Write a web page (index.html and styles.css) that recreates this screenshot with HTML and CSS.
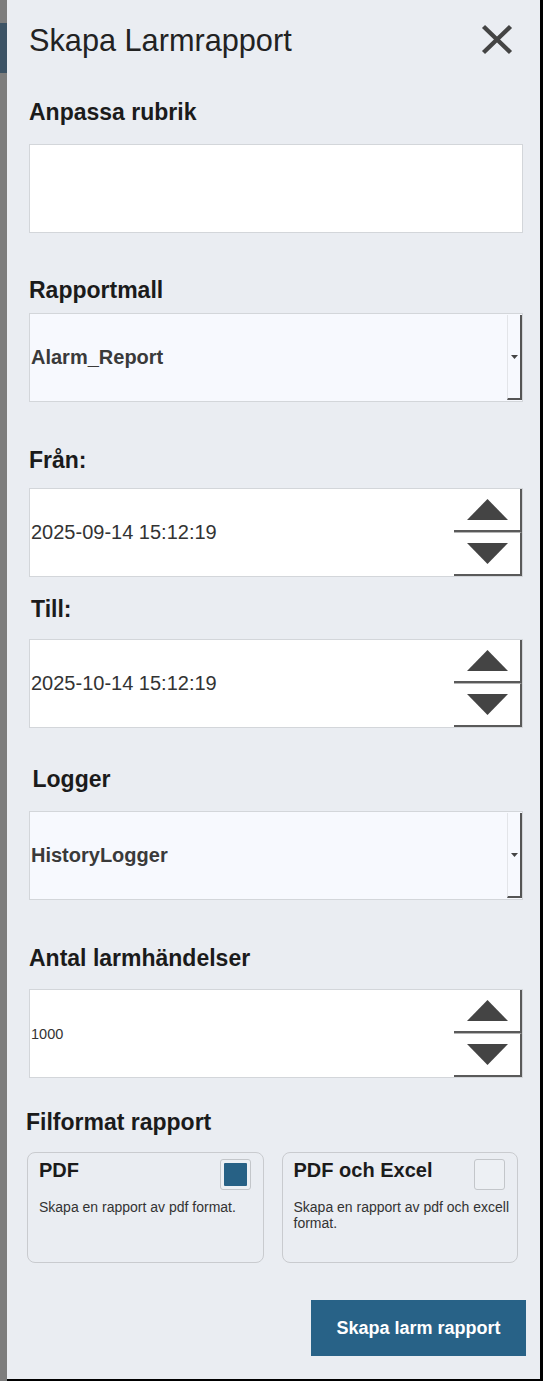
FILE: index.html
```html
<!DOCTYPE html>
<html lang="sv">
<head>
<meta charset="utf-8">
<title>Skapa Larmrapport</title>
<link rel="stylesheet" href="styles.css">
</head>
<body>
<div class="app">
  <div class="rail"><div class="rail-mark"></div></div>
  <main class="panel">
    <header class="panel-header">
      <h1 class="panel-title">Skapa Larmrapport</h1>
      <button class="close-btn" aria-label="Stäng">
        <svg width="32" height="31" viewBox="0 0 32 31"><path d="M2.5 2.5L29.5 28.5M29.5 2.5L2.5 28.5" stroke="#444" stroke-width="4.4" fill="none"/></svg>
      </button>
    </header>

    <section class="field field-rubrik">
      <div class="label">Anpassa rubrik</div>
      <div class="text-input"></div>
    </section>

    <section class="field field-mall">
      <div class="label">Rapportmall</div>
      <div class="select">
        <div class="select-value">Alarm_Report</div>
        <div class="select-btn"><svg width="7" height="4" viewBox="0 0 7 4"><path d="M0 0H7L3.5 4Z" fill="#444"/></svg></div>
      </div>
    </section>

    <section class="field field-fran">
      <div class="label">Från:</div>
      <div class="spin-input">
        <div class="spin-value">2025-09-14 15:12:19</div>
        <div class="spinner">
          <div class="spin-btn"><svg width="41" height="21" viewBox="0 0 41 21"><path d="M0 21L20.5 0L41 21Z" fill="#444"/></svg></div>
          <div class="spin-btn spin-down"><svg width="41" height="21" viewBox="0 0 41 21"><path d="M0 0H41L20.5 21Z" fill="#444"/></svg></div>
        </div>
      </div>
    </section>

    <section class="field field-till">
      <div class="label label-indent">Till:</div>
      <div class="spin-input">
        <div class="spin-value">2025-10-14 15:12:19</div>
        <div class="spinner">
          <div class="spin-btn"><svg width="41" height="21" viewBox="0 0 41 21"><path d="M0 21L20.5 0L41 21Z" fill="#444"/></svg></div>
          <div class="spin-btn spin-down"><svg width="41" height="21" viewBox="0 0 41 21"><path d="M0 0H41L20.5 21Z" fill="#444"/></svg></div>
        </div>
      </div>
    </section>

    <section class="field field-logger">
      <div class="label label-indent-wide">Logger</div>
      <div class="select">
        <div class="select-value">HistoryLogger</div>
        <div class="select-btn"><svg width="7" height="4" viewBox="0 0 7 4"><path d="M0 0H7L3.5 4Z" fill="#444"/></svg></div>
      </div>
    </section>

    <section class="field field-antal">
      <div class="label">Antal larmhändelser</div>
      <div class="spin-input">
        <div class="spin-value spin-value-small">1000</div>
        <div class="spinner">
          <div class="spin-btn"><svg width="41" height="21" viewBox="0 0 41 21"><path d="M0 21L20.5 0L41 21Z" fill="#444"/></svg></div>
          <div class="spin-btn spin-down"><svg width="41" height="21" viewBox="0 0 41 21"><path d="M0 0H41L20.5 21Z" fill="#444"/></svg></div>
        </div>
      </div>
    </section>

    <section class="field field-format">
      <div class="label">Filformat rapport</div>
      <div class="formats">
        <div class="card">
          <div class="card-head">
            <div class="card-title">PDF</div>
            <div class="checkbox checked"><div class="check-fill"></div></div>
          </div>
          <p class="card-desc">Skapa en rapport av pdf format.</p>
        </div>
        <div class="card">
          <div class="card-head">
            <div class="card-title">PDF och Excel</div>
            <div class="checkbox"></div>
          </div>
          <p class="card-desc">Skapa en rapport av pdf och excell format.</p>
        </div>
      </div>
    </section>

    <div class="actions">
      <button class="primary-btn">Skapa larm rapport</button>
    </div>
  </main>
</div>
</body>
</html>
```

FILE: styles.css
```css
* { box-sizing: border-box; }

html, body {
  margin: 0;
  padding: 0;
}

body {
  font-family: "Liberation Sans", Arial, sans-serif;
  background: #808080;
}

.app {
  display: flex;
  width: 543px;
  height: 1381px;
}

.rail {
  width: 7px;
  flex: none;
  background: #7d7d7d;
  padding-top: 23px;
}

.rail-mark {
  height: 50px;
  background: #3c5365;
}

.panel {
  flex: 1;
  display: flex;
  flex-direction: column;
  background: #eaedf2;
  border-right: 3px solid #000;
  border-bottom: 2px solid #000;
  padding: 23px 17px 0 22px;
}

.panel-header {
  display: flex;
  justify-content: space-between;
  align-items: flex-start;
  height: 36px;
}

.panel-title {
  margin: 0;
  font-size: 30.7px;
  line-height: 36px;
  font-weight: normal;
  color: #222;
}

.close-btn {
  display: block;
  width: 32px;
  height: 31px;
  margin: 1px 10px 0 0;
  padding: 0;
  border: 0;
  background: none;
}

.close-btn svg { display: block; }

.label {
  font-size: 23px;
  font-weight: bold;
  line-height: 26px;
  color: #1b1b1b;
}

.label-indent { margin-left: 2px; }
.label-indent-wide { margin-left: 3.5px; }

.field-rubrik { margin-top: 40px; }
.field-rubrik .label { margin-bottom: 19px; }

.field-mall { margin-top: 44px; }
.field-mall .label { margin-bottom: 10px; }

.field-fran { margin-top: 45px; }
.field-fran .label { margin-bottom: 15px; }

.field-till { margin-top: 19px; }
.field-till .label { margin-bottom: 17px; }

.field-logger { margin-top: 38px; }
.field-logger .label { margin-bottom: 19px; }

.field-antal { margin-top: 45px; }
.field-antal .label { margin-bottom: 18px; }

.field-format { margin-top: 31px; }
.field-format .label { margin-bottom: 17px; margin-left: -3px; }

.text-input {
  height: 89px;
  background: #fff;
  border: 1px solid #d3d6da;
}

.select {
  display: flex;
  height: 89px;
  padding: 1px 0 1px 1px;
  background: #f7f9fe;
  border: 1px solid #d3d6da;
}

.select-value {
  flex: 1;
  display: flex;
  align-items: center;
  font-size: 20px;
  font-weight: bold;
  color: #3a3a3a;
}

.select-btn {
  width: 15px;
  display: flex;
  align-items: center;
  justify-content: center;
  border-left: 1px solid #e3e5e9;
  border-right: 2px solid #555;
  border-bottom: 2px solid #555;
}

.select-btn svg { display: block; }

.spin-input {
  display: flex;
  height: 89px;
  background: #fff;
  border: 1px solid #d3d6da;
}

.spin-value {
  flex: 1;
  display: flex;
  align-items: center;
  padding-left: 1px;
  font-size: 20px;
  color: #333;
}

.spin-value-small { font-size: 14.5px; }

.spinner {
  width: 68px;
  display: flex;
  flex-direction: column;
}

.spin-btn {
  flex: 1;
  display: flex;
  align-items: center;
  justify-content: center;
  border-right: 2px solid #5a5a5a;
  border-bottom: 2px solid #5a5a5a;
}

.spin-down { border-top: 1px solid #b5b5b5; }

.spin-btn svg { display: block; }

.formats {
  display: flex;
  gap: 18px;
  margin: 0 5px 0 -2px;
}

.card {
  flex: 1;
  height: 111px;
  padding: 6px 4px 0 11px;
  border: 1px solid #c9cbcf;
  border-radius: 8px;
}

.card-head {
  display: flex;
  justify-content: space-between;
  align-items: flex-start;
}

.card-title {
  font-size: 20px;
  font-weight: bold;
  line-height: 22px;
  color: #1b1b1b;
}

.checkbox {
  width: 31px;
  height: 31px;
  margin-right: 8px;
  padding: 3px;
  border: 1px solid #c3c6ca;
  border-radius: 3px;
  background: #edf0f4;
}

.check-fill {
  width: 100%;
  height: 100%;
  background: #276185;
  border-radius: 1px;
}

.card-desc {
  margin: 9px 0 0;
  font-size: 14px;
  line-height: 16px;
  color: #333;
}

.actions {
  display: flex;
  justify-content: flex-end;
  margin: 37px -3px 0 0;
}

.primary-btn {
  width: 215px;
  height: 56px;
  border: 0;
  background: #286287;
  color: #fff;
  font-family: "Liberation Sans", Arial, sans-serif;
  font-size: 18px;
  font-weight: bold;
}
```
